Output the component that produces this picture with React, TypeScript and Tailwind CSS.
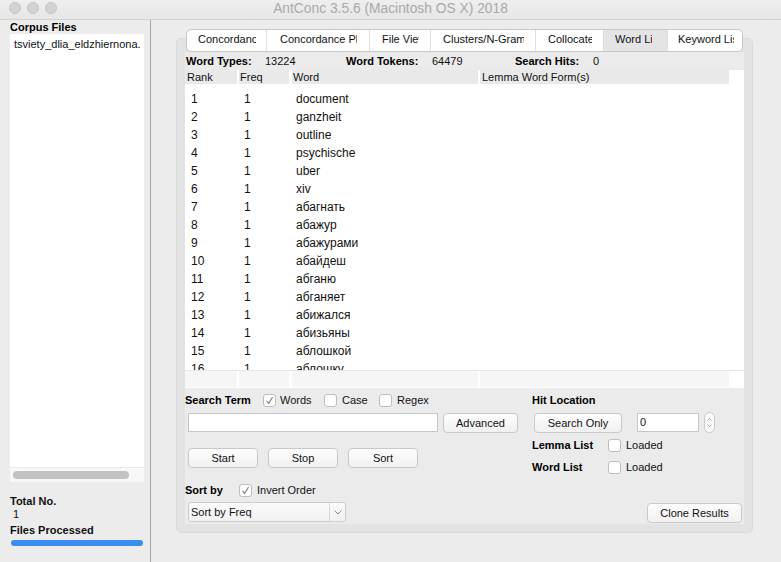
const words = [
  'document',
  'ganzheit',
  'outline',
  'psychische',
  'uber',
  'xiv',
  'абагнать',
  'абажур',
  'абажурами',
  'абайдеш',
  'абганю',
  'абганяет',
  'абижался',
  'абизьяны',
  'аблошкой',
  'аблошку',
];

const tabs = [
  { label: 'Concordance', w: 'w-[79px]', pad: 'pl-[11px] pr-[10px]' },
  { label: 'Concordance Plot', w: 'w-[103px]', pad: 'pl-[13px] pr-[12px]' },
  { label: 'File View', w: 'w-[61px]', pad: 'pl-[12px] pr-[11px]' },
  { label: 'Clusters/N-Grams', w: 'w-[105px]', pad: 'pl-[12px] pr-[11px]' },
  { label: 'Collocates', w: 'w-[68px]', pad: 'pl-[12px] pr-[11px]' },
  { label: 'Word List', w: 'w-[64px]', pad: 'pl-[11px] pr-[15px]', active: true },
  { label: 'Keyword List', w: 'w-[75px]', pad: 'pl-[10px] pr-[8px]' },
];

const Check = ({ checked }: { checked?: boolean }) => (
  <div className="w-[13px] h-[13px] shrink-0 bg-white border border-[#bdbdbd] rounded-[3px] flex items-center justify-center">
    {checked && (
      <svg width="11" height="11" viewBox="0 0 11 11">
        <polyline points="2.5,5.8 4.6,8.4 8.6,2" fill="none" stroke="#8c8c8c" strokeWidth="1.3" />
      </svg>
    )}
  </div>
);

const Button = ({ label, w }: { label: string; w: string }) => (
  <div
    className={`${w} h-[20px] shrink-0 rounded-[4px] border border-[#c9c9c9] bg-linear-to-b from-[#fdfdfd] to-[#f1f1f1] flex items-center justify-center text-[11px] text-[#111]`}
  >
    {label}
  </div>
);

const TitleBar = () => (
  <div className="h-[20px] shrink-0 relative flex items-center justify-center bg-linear-to-b from-[#efefef] to-[#e6e6e6] border-b border-[#d2d2d2]">
    <div className="absolute left-[9px] top-[2px] flex gap-[6px]">
      <div className="w-[12px] h-[12px] rounded-full bg-[#d3d3d3] border border-[#c4c4c4]" />
      <div className="w-[12px] h-[12px] rounded-full bg-[#d3d3d3] border border-[#c4c4c4]" />
      <div className="w-[12px] h-[12px] rounded-full bg-[#d3d3d3] border border-[#c4c4c4]" />
    </div>
    <span className="text-[13.8px] text-[#a9a9a9] leading-none -mt-[1px]">AntConc 3.5.6 (Macintosh OS X) 2018</span>
  </div>
);

const LeftPanel = () => (
  <div className="w-[150px] shrink-0 pl-[10px] pr-[6px] flex flex-col">
    <div className="pt-[1px] h-[14px] leading-[13px] font-bold text-[11px] text-black">Corpus Files</div>
    <div className="h-[448px] bg-white flex flex-col">
      <div className="flex-1 pt-[4px] pl-[4px] pr-[4px] overflow-hidden">
        <div className="leading-[13px] whitespace-nowrap overflow-hidden">tsviety_dlia_eldzhiernona.txt</div>
      </div>
      <div className="h-[15px] bg-[#f8f8f8] border-t border-[#ebebeb]">
        <div className="mt-[3px] ml-[3px] w-[116px] h-[8px] rounded-full bg-[#c2c2c2]" />
      </div>
    </div>
    <div className="mt-[13px] leading-[13px] font-bold">Total No.</div>
    <div className="leading-[13px] pl-[3px]">1</div>
    <div className="mt-[3px] leading-[13px] font-bold">Files Processed</div>
    <div className="mt-[3px] ml-[1px] w-[132px] h-[6px] rounded-full bg-[#3a8ef0]" />
  </div>
);

const Table = () => (
  <div className="h-[318px] bg-white flex flex-col">
    <div className="h-[14px] flex leading-[14px] text-[11px]">
      <div className="w-[52px] bg-[#e9e9e9] pl-[2px]">Rank</div>
      <div className="w-[2px]" />
      <div className="w-[50px] bg-[#e9e9e9] pl-[1px]">Freq</div>
      <div className="w-[3px]" />
      <div className="w-[186px] bg-[#e9e9e9] pl-[1px]">Word</div>
      <div className="w-[2px]" />
      <div className="w-[249px] bg-[#e9e9e9] pl-[2px]">Lemma Word Form(s)</div>
    </div>
    <div className="h-[286px] overflow-hidden pt-[6px] text-[12px] text-[#111]">
      {words.map((w, i) => (
        <div key={i} className="h-[18px] flex items-center">
          <div className="w-[54px] pl-[6px]">{i + 1}</div>
          <div className="w-[53px] pl-[5px]">1</div>
          <div className="pl-[4px]">{w}</div>
        </div>
      ))}
    </div>
    <div className="h-[18px] border-t border-[#e6e6e6] flex pb-[1px]">
      <div className="w-[52px] bg-[#f6f6f6]" />
      <div className="w-[2px]" />
      <div className="w-[50px] bg-[#f6f6f6]" />
      <div className="w-[3px]" />
      <div className="w-[186px] bg-[#f6f6f6]" />
      <div className="w-[2px]" />
      <div className="w-[249px] bg-[#f6f6f6]" />
    </div>
  </div>
);

const Controls = () => (
  <div className="flex-1 flex text-[11px] text-[#111]">
    <div className="w-[347px] flex flex-col">
      <div className="mt-[5px] h-[14px] flex items-center">
        <div className="w-[78px] font-bold text-black">Search Term</div>
        <div className="w-[61px] flex items-center gap-[4px]">
          <Check checked />
          <span>Words</span>
        </div>
        <div className="w-[55px] flex items-center gap-[5px]">
          <Check />
          <span>Case</span>
        </div>
        <div className="flex items-center gap-[5px]">
          <Check />
          <span>Regex</span>
        </div>
      </div>
      <div className="mt-[6px] flex items-start">
        <div className="ml-[3px] w-[250px] h-[19px] bg-white border border-[#c6c6c6]" />
        <div className="ml-[5px]">
          <Button label="Advanced" w="w-[75px]" />
        </div>
      </div>
      <div className="mt-[15px] ml-[3px] flex gap-[10px]">
        <Button label="Start" w="w-[70px]" />
        <Button label="Stop" w="w-[70px]" />
        <Button label="Sort" w="w-[70px]" />
      </div>
      <div className="mt-[15px] h-[14px] flex items-center">
        <div className="w-[54px] font-bold text-black">Sort by</div>
        <Check checked />
        <span className="ml-[5px]">Invert Order</span>
      </div>
      <div className="mt-[5px] ml-[3px] w-[158px] h-[20px] rounded-[3px] border border-[#cdcdcd] bg-linear-to-b from-[#fafafa] to-[#f1f1f1] flex items-center">
        <span className="flex-1 pl-[2px]">Sort by Freq</span>
        <div className="w-[16px] h-full border-l border-[#d6d6d6] flex items-center justify-center">
          <svg width="8" height="5" viewBox="0 0 8 5">
            <polyline points="0.5,0.5 4,4 7.5,0.5" fill="none" stroke="#8e8e8e" strokeWidth="1" />
          </svg>
        </div>
      </div>
    </div>
    <div className="flex-1 flex flex-col">
      <div className="mt-[5px] h-[14px] flex items-center font-bold text-black">Hit Location</div>
      <div className="mt-[6px] flex items-start">
        <div className="ml-[2px]">
          <Button label="Search Only" w="w-[88px]" />
        </div>
        <div className="ml-[15px] w-[62px] h-[19px] bg-white border border-[#c6c6c6] pl-[2px] leading-[17px]">0</div>
        <div className="ml-[5px] -mt-[1px] w-[11px] h-[21px] rounded-full border border-[#cacaca] bg-[#fafafa] flex flex-col items-center justify-center gap-[3px]">
          <svg width="5" height="3" viewBox="0 0 5 3">
            <polyline points="0.5,2.5 2.5,0.5 4.5,2.5" fill="none" stroke="#9a9a9a" strokeWidth="0.9" />
          </svg>
          <svg width="5" height="3" viewBox="0 0 5 3">
            <polyline points="0.5,0.5 2.5,2.5 4.5,0.5" fill="none" stroke="#9a9a9a" strokeWidth="0.9" />
          </svg>
        </div>
      </div>
      <div className="mt-[6px] h-[13px] flex items-center">
        <div className="w-[76px] font-bold text-black">Lemma List</div>
        <Check />
        <span className="ml-[5px] -mt-[1px]">Loaded</span>
      </div>
      <div className="mt-[9px] h-[13px] flex items-center">
        <div className="w-[76px] font-bold text-black">Word List</div>
        <Check />
        <span className="ml-[5px] -mt-[1px]">Loaded</span>
      </div>
      <div className="mt-[29px] self-end mr-[2px]">
        <Button label="Clone Results" w="w-[95px]" />
      </div>
    </div>
  </div>
);

const RightPanel = () => (
  <div className="flex-1 pl-[25px]">
    <div className="mt-[18px] w-[577px] h-[495px] bg-[#e3e3e3] border border-[#dadada] rounded-[5px] flex flex-col">
      <div className="-mt-[10px] ml-[9px] h-[23px] flex self-start bg-white border border-[#c6c6c6] rounded-[5px] overflow-hidden text-[11px] text-[#111]">
        {tabs.map((t, i) => (
          <div
            key={t.label}
            className={`${t.w} ${t.pad} h-full shrink-0 pt-[3px] ${i > 0 ? 'border-l border-[#e0e0e0]' : ''} ${t.active ? 'bg-[#e4e4e4]' : ''}`}
          >
            <div className="overflow-hidden whitespace-nowrap leading-[13px]">{t.label}</div>
          </div>
        ))}
      </div>
      <div className="ml-[8px] w-[559px] flex-1 mb-[8px] bg-[#ebebeb] flex flex-col">
        <div className="pt-[3px] h-[18px] flex leading-[13px] text-[11px] text-[#111]">
          <span className="w-[80px] pl-[1px] font-bold text-black">Word Types:</span>
          <span className="w-[81px]">13224</span>
          <span className="w-[86px] font-bold text-black">Word Tokens:</span>
          <span className="w-[83px]">64479</span>
          <span className="w-[78px] font-bold text-black">Search Hits:</span>
          <span>0</span>
        </div>
        <Table />
        <Controls />
      </div>
    </div>
  </div>
);

export default function App() {
  return (
    <div className="w-[781px] h-[562px] bg-[#ececec] flex flex-col overflow-hidden font-['Liberation_Sans',Arial,sans-serif] text-[11px] text-[#111]">
      <TitleBar />
      <div className="flex flex-1 min-h-0">
        <LeftPanel />
        <div className="w-px shrink-0 bg-[#a6a6a6]" />
        <RightPanel />
      </div>
    </div>
  );
}
